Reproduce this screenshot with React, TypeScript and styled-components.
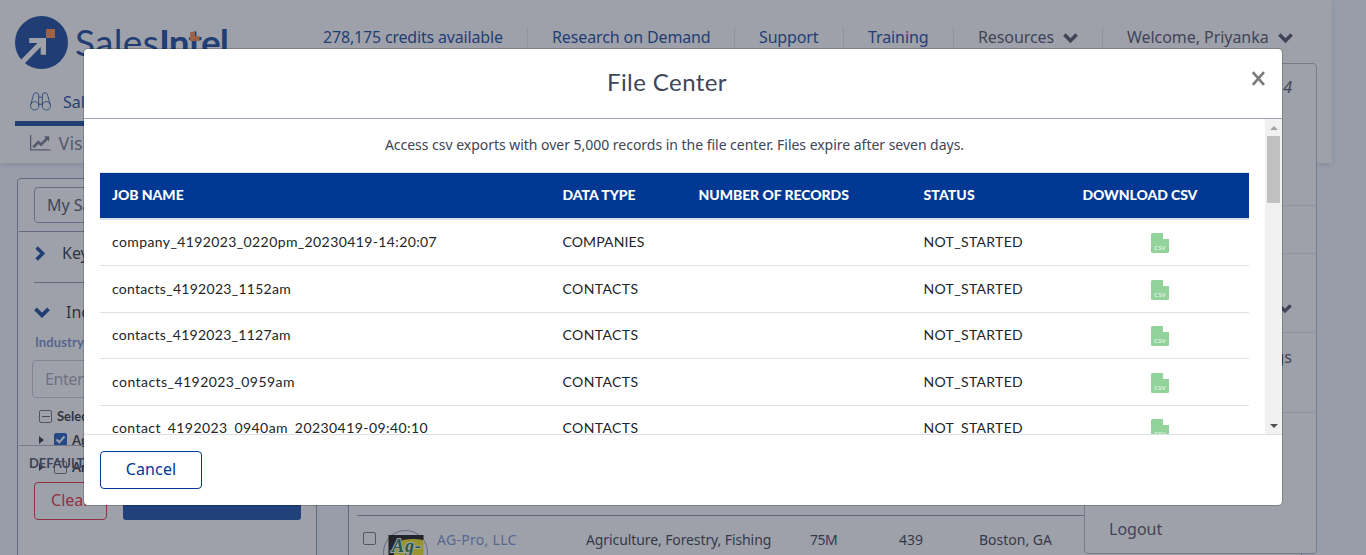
import React from "react";
import styled, { createGlobalStyle, css } from "styled-components";

const sans = `"Noto Sans", "Open Sans", sans-serif`;
const round = `Lato, "Noto Sans", sans-serif`;

const GlobalStyle = createGlobalStyle`
  *, *::before, *::after { box-sizing: border-box; }
  body { margin: 0; font-family: ${sans}; color: #404557; overflow: hidden; }
`;

const Page = styled.div`
  position: relative;
  width: 1366px;
  height: 555px;
  overflow: hidden;
  background: #eff6fd;
`;

const Text = styled.span<{ $size?: number; $ls?: number; $color?: string; $weight?: number; $round?: boolean; $italic?: boolean }>`
  font-family: ${(p) => (p.$round ? round : sans)};
  font-size: ${(p) => p.$size ?? 16}px;
  font-weight: ${(p) => p.$weight ?? 400};
  font-style: ${(p) => (p.$italic ? "italic" : "normal")};
  letter-spacing: ${(p) => p.$ls ?? 0}px;
  color: ${(p) => p.$color ?? "inherit"};
  line-height: 20px;
  white-space: nowrap;
`;

/* ---------- Header ---------- */

const Header = styled.header`
  width: 1332px;
  height: 163px;
  background: #fff;
  box-shadow: 0 2px 5px rgba(64, 80, 110, 0.18);
`;

const TopBar = styled.div`
  display: flex;
  height: 88px;
`;

const Brand = styled.div`
  display: flex;
  width: 299px;
  padding: 16px 0 0 15px;
`;

const Wordmark = styled.div`
  position: relative;
  display: flex;
  margin: 4px 0 0 7px;
  height: 44px;
  color: #003893;
  font: 400 37px/44px ${round};
  letter-spacing: 0.3px;
`;

const WordBold = styled.span`
  font-weight: 700;
  letter-spacing: -1px;
`;

const AccentDots = styled.svg`
  position: absolute;
  left: 115px;
  top: 12px;
`;

const Nav = styled.nav`
  display: flex;
  padding-top: 27px;
`;

const NavItem = styled.div<{ $width: number; $muted?: boolean }>`
  display: flex;
  align-items: center;
  gap: 9px;
  width: ${(p) => p.$width}px;
  height: 21px;
  padding: 0 0 1px 24px;
  border-right: 1px solid #dfe2ef;
  color: ${(p) => (p.$muted ? "#404557" : "#003893")};
  &:last-child { border-right: 0; }
`;

const Tab = styled.div<{ $active?: boolean }>`
  display: flex;
  align-items: center;
  width: 260px;
  margin-left: 15px;
  padding-left: 15px;
  ${(p) =>
    p.$active
      ? css`
          height: 38px;
          color: #003893;
          gap: 12px;
          padding-bottom: 6px;
          border-bottom: 5px solid #003893;
        `
      : css`
          height: 34px;
          padding-bottom: 1px;
          color: #6c7186;
          gap: 8px;
        `}
`;

/* ---------- Sidebar ---------- */

const Main = styled.div`
  display: flex;
  align-items: flex-start;
  padding: 15px 0 0 17px;
`;

const Sidebar = styled.aside`
  position: relative;
  width: 300px;
  height: 400px;
  border: 1px solid #8a8fa6;
  border-radius: 4px;
  background: #fff;
`;

const SelectWrap = styled.div`
  height: 53px;
  margin-left: 1px;
  padding: 8px 15px;
  border-bottom: 1px solid #8a8fa6;
`;

const SelectBox = styled.div`
  display: flex;
  align-items: center;
  height: 36px;
  padding: 0 0 1px 12px;
  border: 1px solid #9297ad;
  border-radius: 4px;
`;

const FilterRow = styled.div<{ $height: number; $gap: number; $line?: boolean }>`
  display: flex;
  align-items: center;
  gap: ${(p) => p.$gap}px;
  height: ${(p) => p.$height}px;
  margin-left: 16px;
  margin-right: 16px;
  padding: ${(p) => (p.$line ? "0 0 8px" : "8px 0 0")};
  border-bottom: ${(p) => (p.$line ? "1px solid #8a8fa6" : "0")};
  color: #20242e;
`;

const FieldLabel = styled.div`
  display: flex;
  align-items: flex-start;
  height: 28px;
  padding: 0 0 0 17px;
`;

const Field = styled.div`
  display: flex;
  align-items: center;
  width: 270px;
  height: 38px;
  margin-left: 14px;
  padding-left: 12px;
  border: 1px solid #c3c8d9;
  border-radius: 4px;
`;

const TreeRow = styled.div<{ $height: number }>`
  display: flex;
  align-items: center;
  gap: 5px;
  height: ${(p) => p.$height}px;
  padding-left: 21px;
  color: #20242e;
`;

const CheckBox = styled.span<{ $on?: boolean; $lift?: number }>`
  display: flex;
  align-items: center;
  justify-content: center;
  width: 13px;
  height: 13px;
  flex: none;
  margin-bottom: ${(p) => p.$lift ?? 0}px;
  border: 1px solid ${(p) => (p.$on ? "#0b4fb5" : "#696969")};
  border-radius: 2px;
  background: ${(p) => (p.$on ? "#0b4fb5" : "#fff")};
`;

const Dash = styled.span`
  width: 8px;
  height: 1px;
  background: #555;
`;

const Caret = styled.span`
  border-left: 5px solid #20242e;
  border-top: 4px solid transparent;
  border-bottom: 4px solid transparent;
  margin-right: 5px;
`;

const SidebarFooter = styled.div`
  position: absolute;
  left: 1px;
  right: 0;
  top: 266px;
  padding: 7px 15px 0;
  border-top: 1px solid #a9aec2;
`;

const FooterTitle = styled.div`
  display: flex;
  height: 29px;
  margin-left: -5px;
  color: #404557;
`;

const ButtonRow = styled.div`
  display: flex;
  gap: 16px;
`;

const ClearButton = styled.button`
  width: 73px;
  height: 38px;
  padding: 0 0 2px;
  border: 1px solid #e0202b;
  border-radius: 4px;
  background: transparent;
  color: #e0202b;
`;

const SearchButton = styled.button`
  width: 178px;
  height: 38px;
  border: 0;
  border-radius: 3px;
  background: #003f9f;
`;

/* ---------- Results ---------- */

const Results = styled.section`
  width: 954px;
  height: 400px;
  margin-left: 31px;
  padding: 336px 8px 0;
  border: 1px solid #8a8fa6;
  border-radius: 4px;
  background: #fff;
`;

const CompanyRow = styled.div`
  display: grid;
  grid-template-columns: 20px 54px 149px 224px 89px 80px 1fr;
  grid-template-rows: 48px;
  align-items: center;
  height: 60px;
  padding-left: 6px;
  border-top: 1px solid #8a8fa6;
  color: #2a2d38;
`;

/* ---------- User menu ---------- */

const UserMenu = styled.div`
  position: absolute;
  left: 1084px;
  top: 63px;
  width: 233px;
  height: 491px;
  border: 1px solid #aeb2bf;
  border-radius: 4px;
  background: #fff;
`;

const MenuSection = styled.div<{ $height: number; $pad?: string; $align?: string; $end?: boolean }>`
  display: flex;
  align-items: ${(p) => p.$align ?? "flex-start"};
  justify-content: ${(p) => (p.$end ? "flex-end" : "flex-start")};
  height: ${(p) => p.$height}px;
  padding: ${(p) => p.$pad ?? "0 24px"};
  border-bottom: 1px solid #dfe2ef;
  color: #404557;
  &:last-child { border-bottom: 0; }
`;

/* ---------- Modal ---------- */

const Overlay = styled.div`
  position: absolute;
  inset: 0;
  display: flex;
  justify-content: center;
  align-items: flex-start;
  padding-top: 48px;
  background: rgba(63, 67, 85, 0.5);
`;

const Dialog = styled.div`
  display: flex;
  flex-direction: column;
  width: 1200px;
  height: 458px;
  border: 1px solid rgba(0, 0, 0, 0.2);
  border-radius: 5px;
  background: #fff;
  background-clip: padding-box;
`;

const DialogHeader = styled.div`
  display: flex;
  align-items: center;
  height: 70px;
  padding: 0 16px 3px;
  border-bottom: 1px solid #9fa1b3;
`;

const DialogTitle = styled.h4`
  flex: 1;
  margin: 0;
  padding-left: 1px;
  text-align: center;
  font: 400 24px/30px ${round};
  letter-spacing: 0.42px;
  color: #404557;
`;

const CloseButton = styled.button`
  display: flex;
  width: 33px;
  padding: 0 0 7px 18px;
  border: 0;
  background: none;
`;

const DialogBody = styled.div`
  display: flex;
  height: 315px;
`;

const Scroller = styled.div`
  width: 1181px;
  height: 315px;
  overflow: hidden;
  padding: 16px 16px 0;
`;

const Intro = styled.p`
  display: flex;
  justify-content: center;
  margin: 0;
  height: 37px;
`;

const ScrollTrack = styled.div`
  display: flex;
  flex-direction: column;
  align-items: center;
  justify-content: space-between;
  width: 17px;
  background: #f1f1f1;
`;

const ScrollArrow = styled.span`
  height: 17px;
  display: flex;
  align-items: center;
  justify-content: center;
`;

const Thumb = styled.span`
  width: 13px;
  height: 67px;
  margin-bottom: auto;
  background: #c1c1c1;
`;

const gridColumns = css`
  display: grid;
  grid-template-columns: 450.5px 136px 225px 159px 1fr;
  align-items: center;
`;

const HeadRow = styled.div`
  ${gridColumns}
  height: 48px;
  padding-bottom: 1px;
  border-top: 1px solid #dee2e6;
  border-bottom: 2px solid #dee2e6;
  background: #003893;
  background-clip: padding-box;
`;

const Row = styled.div<{ $tall: boolean }>`
  ${gridColumns}
  height: ${(p) => (p.$tall ? 47 : 46)}px;
  padding-bottom: ${(p) => (p.$tall ? 0 : 1)}px;
  border-bottom: 1px solid #dee2e6;
`;

const Cell = styled.div`
  display: flex;
  align-items: center;
  padding-left: 12px;
`;

const FileCell = styled.div`
  display: flex;
  justify-content: center;
  padding-top: 1px;
`;

const DialogFooter = styled.div`
  flex: 1;
  padding: 16px;
  border-top: 1px solid #dee2e6;
`;

const CancelButton = styled.button`
  display: block;
  width: 102px;
  height: 38px;
  padding: 0 0 2px;
  border: 1px solid #003893;
  border-radius: 4px;
  background: #fff;
  color: #003893;
`;

/* ---------- Icons ---------- */

const ChevronSvg = styled.svg<{ $right?: boolean; $shift?: number }>`
  flex: none;
  margin-left: ${(p) => p.$shift ?? 0}px;
  transform: ${(p) => (p.$right ? "rotate(-90deg)" : "none")};
`;

const Chevron = ({ right, color = "#404557", width = 15, shift }: { right?: boolean; color?: string; width?: number; shift?: number }) => (
  <ChevronSvg $right={right} $shift={shift} width={width} height={width} viewBox="0 0 14 14">
    <path d="M1.3 4.3 7 10 12.7 4.3" fill="none" stroke={color} strokeWidth="3.3" />
  </ChevronSvg>
);

const LogoMark = () => (
  <svg width="53" height="54" viewBox="0 0 53 54">
    <circle cx="26.5" cy="26.5" r="26.5" fill="#003893" />
    <path d="M14.2 22H31V38.8H25.7V30.9L9.6 47.5 5.8 44 22.5 27H14.2Z" fill="#fff" />
    <rect x="31" y="13" width="9" height="9" fill="#ff8133" />
  </svg>
);

const Binoculars = () => (
  <svg width="21" height="19" viewBox="0 0 21 19" fill="none" stroke="#003893" strokeWidth="0.8">
    <circle cx="4.7" cy="13.8" r="4.2" />
    <circle cx="16.3" cy="13.8" r="4.2" />
    <path d="M.8 12.6 3.4 3Q4 .7 6 .7 8.6.7 8.7 3V13.8M20.2 12.6 17.6 3Q17 .7 15 .7 12.4.7 12.3 3V13.8M8.7 5.2H12.3M8.7 12.2H12.3" />
  </svg>
);

const TrendLine = () => (
  <svg width="20.6" height="16" viewBox="0 128 2048 1590" fill="#6c7186">
    <path d="M2048 1536v128h-2048v-1536h128v1408h1920zm-128-1248v435q0 21-19.5 29.5t-35.5-7.5l-121-121-633 633q-10 10-23 10t-23-10l-233-233-416 416-192-192 585-585q10-10 23-10t23 10l233 233 464-464-121-121q-16-16-7.5-35.5t29.5-19.5h435q14 0 23 9t9 23z" />
  </svg>
);

const CsvFile = () => (
  <svg width="18" height="20" viewBox="0 0 18 20">
    <path d="M1.5 0H12V6H18V18.5Q18 20 16.5 20H1.5Q0 20 0 18.5V1.5Q0 0 1.5 0Z" fill="#92d29b" />
    <text x="9" y="17" textAnchor="middle" textLength="11.5" fontFamily="Lato, sans-serif" fontSize="5.6" fontWeight="700" fill="#e4f5e7">CSV</text>
  </svg>
);

const CloseX = () => (
  <svg width="15" height="15" viewBox="0 0 15 15">
    <path d="M1.8 1.2 13 13.8M13 1.2 1.8 13.8" stroke="#7b7b7b" strokeWidth="2.6" />
  </svg>
);

const Tick = () => (
  <svg width="11" height="11" viewBox="0 0 11 11">
    <path d="M1.5 5.5 4.3 8.3 9.5 2.5" fill="none" stroke="#fff" strokeWidth="2" />
  </svg>
);

const CompanyLogo = styled.svg`
  align-self: start;
  margin-top: 14px;
`;

const AgProLogo = () => (
  <CompanyLogo width="46" height="46" viewBox="0 0 46 46">
    <circle cx="22.5" cy="22.5" r="22" fill="#fff" stroke="#8a8fa6" />
    <rect x="5.5" y="5" width="35" height="35" fill="#f3e500" />
    <path d="M5.5 5H40.5V10Q30 8 20 10L12 14 9 40H5.5Z" fill="#050505" />
    <text x="9" y="21.5" fontFamily="Liberation Serif, serif" fontStyle="italic" fontWeight="700" fontSize="18" fill="#0b6b3c" stroke="#fff" strokeWidth="2" paintOrder="stroke" textLength="29">Ag-</text>
  </CompanyLogo>
);

/* ---------- Data ---------- */

const jobs = [
  { name: "company_4192023_0220pm_20230419-14:20:07", ls: 0.39, type: "COMPANIES", typeLs: 0.13 },
  { name: "contacts_4192023_1152am", ls: 0.28, type: "CONTACTS", typeLs: 0.4 },
  { name: "contacts_4192023_1127am", ls: 0.27, type: "CONTACTS", typeLs: 0.4 },
  { name: "contacts_4192023_0959am", ls: 0.45, type: "CONTACTS", typeLs: 0.4 },
  { name: "contact_4192023_0940am_20230419-09:40:10", ls: 0.43, type: "CONTACTS", typeLs: 0.4 },
];

const heads = [
  { label: "JOB NAME", ls: -0.05 },
  { label: "DATA TYPE", ls: -0.03 },
  { label: "NUMBER OF RECORDS", ls: -0.06 },
  { label: "STATUS", ls: 0.1 },
  { label: "DOWNLOAD CSV", ls: -0.08 },
];

function JobRow({ job, tall }: { job: (typeof jobs)[number]; tall: boolean }) {
  return (
    <Row $tall={tall}>
      <Cell><Text $size={14} $ls={job.ls} $color="#212529" $round>{job.name}</Text></Cell>
      <Cell><Text $size={14} $ls={job.typeLs} $color="#212529" $round>{job.type}</Text></Cell>
      <Cell />
      <Cell><Text $size={14} $ls={0.33} $color="#212529" $round>NOT_STARTED</Text></Cell>
      <FileCell><CsvFile /></FileCell>
    </Row>
  );
}

export default function App() {
  return (
    <Page>
      <GlobalStyle />
      <Header>
        <TopBar>
          <Brand>
            <LogoMark />
            <Wordmark>
              Sales<WordBold>Intel</WordBold>
              <AccentDots width="10" height="10">
                <path d="M0 0H5V4H9.5V9H0Z" fill="#ff8133" />
              </AccentDots>
            </Wordmark>
          </Brand>
          <Nav>
            <NavItem $width={229}><Text $ls={-0.18}>278,175 credits available</Text></NavItem>
            <NavItem $width={207}><Text $ls={-0.12}>Research on Demand</Text></NavItem>
            <NavItem $width={109}><Text $ls={-0.15}>Support</Text></NavItem>
            <NavItem $width={110}><Text $ls={-0.1}>Training</Text></NavItem>
            <NavItem $width={149} $muted><Text $ls={-0.1}>Resources</Text><Chevron /></NavItem>
            <NavItem $width={200} $muted><Text $ls={-0.05}>Welcome, Priyanka</Text><Chevron /></NavItem>
          </Nav>
        </TopBar>
        <Tab $active><Binoculars /><Text>Sales</Text></Tab>
        <Tab><TrendLine /><Text $size={18}>Visitor</Text></Tab>
      </Header>

      <Main>
        <Sidebar>
          <SelectWrap>
            <SelectBox><Text>My Saved</Text></SelectBox>
          </SelectWrap>
          <FilterRow $height={51} $gap={15} $line>
            <Chevron right color="#003893" shift={-2} /><Text>Keywords</Text>
          </FilterRow>
          <FilterRow $height={49} $gap={16}>
            <Chevron color="#003893" width={16} /><Text>Industry</Text>
          </FilterRow>
          <FieldLabel>
            <Text $size={13} $weight={700} $ls={0.1} $round $color="#6b8cc9">Industry</Text>
          </FieldLabel>
          <Field><Text $ls={-0.4} $color="#9a9fb2">Enter</Text></Field>
          <TreeRow $height={36}>
            <CheckBox><Dash /></CheckBox><Text $size={13} $weight={700} $round>Select</Text>
          </TreeRow>
          <TreeRow $height={11}>
            <Caret /><CheckBox $on><Tick /></CheckBox><Text $size={13} $weight={700} $round>Agriculture</Text>
          </TreeRow>
          <TreeRow $height={44}>
            <Caret /><CheckBox /><Text $size={13} $weight={700} $round>Arts</Text>
          </TreeRow>
          <SidebarFooter>
            <FooterTitle><Text $size={13} $weight={700} $ls={-0.1} $round>DEFAULT</Text></FooterTitle>
            <ButtonRow>
              <ClearButton><Text>Clear</Text></ClearButton>
              <SearchButton />
            </ButtonRow>
          </SidebarFooter>
        </Sidebar>
        <Results>
          <CompanyRow>
            <CheckBox $lift={3} />
            <AgProLogo />
            <Text $size={14} $ls={0.3} $color="#6b8cc9">AG-Pro, LLC</Text>
            <Text $size={14} $ls={-0.1}>Agriculture, Forestry, Fishing</Text>
            <Text $size={14} $ls={-0.5}>75M</Text>
            <Text $size={14}>439</Text>
            <Text $size={14}>Boston, GA</Text>
          </CompanyRow>
        </Results>
      </Main>

      <UserMenu>
        <MenuSection $height={142} $end $pad="13px 24px 0"><Text $italic>4</Text></MenuSection>
        <MenuSection $height={48} />
        <MenuSection $height={79} $end $align="flex-end" $pad="0 24px 17px"><Chevron width={14} /></MenuSection>
        <MenuSection $height={80} $end $pad="14px 24px 0"><Text>Settings</Text></MenuSection>
        <MenuSection $height={140} $align="flex-end" $pad="0 24px 14px"><Text>Logout</Text></MenuSection>
      </UserMenu>

      <Overlay>
        <Dialog>
          <DialogHeader>
            <DialogTitle>File Center</DialogTitle>
            <CloseButton><CloseX /></CloseButton>
          </DialogHeader>
          <DialogBody>
            <Scroller>
              <Intro>
                <Text $size={14} $ls={-0.025}>Access csv exports with over 5,000 records in the file center. Files expire after seven days.</Text>
              </Intro>
              <HeadRow>
                {heads.map((h) => (
                  <Cell key={h.label}><Text $size={14} $weight={900} $ls={h.ls} $color="#fff" $round>{h.label}</Text></Cell>
                ))}
              </HeadRow>
              {jobs.map((job, i) => (
                <JobRow key={job.name} job={job} tall={i % 2 === 1} />
              ))}
            </Scroller>
            <ScrollTrack>
              <ScrollArrow><svg width="8" height="4"><path d="M0 4 4 0 8 4Z" fill="#a3a3a3" /></svg></ScrollArrow>
              <Thumb />
              <ScrollArrow><svg width="8" height="4"><path d="M0 0 4 4 8 0Z" fill="#505050" /></svg></ScrollArrow>
            </ScrollTrack>
          </DialogBody>
          <DialogFooter>
            <CancelButton><Text $ls={0.15}>Cancel</Text></CancelButton>
          </DialogFooter>
        </Dialog>
      </Overlay>
    </Page>
  );
}
